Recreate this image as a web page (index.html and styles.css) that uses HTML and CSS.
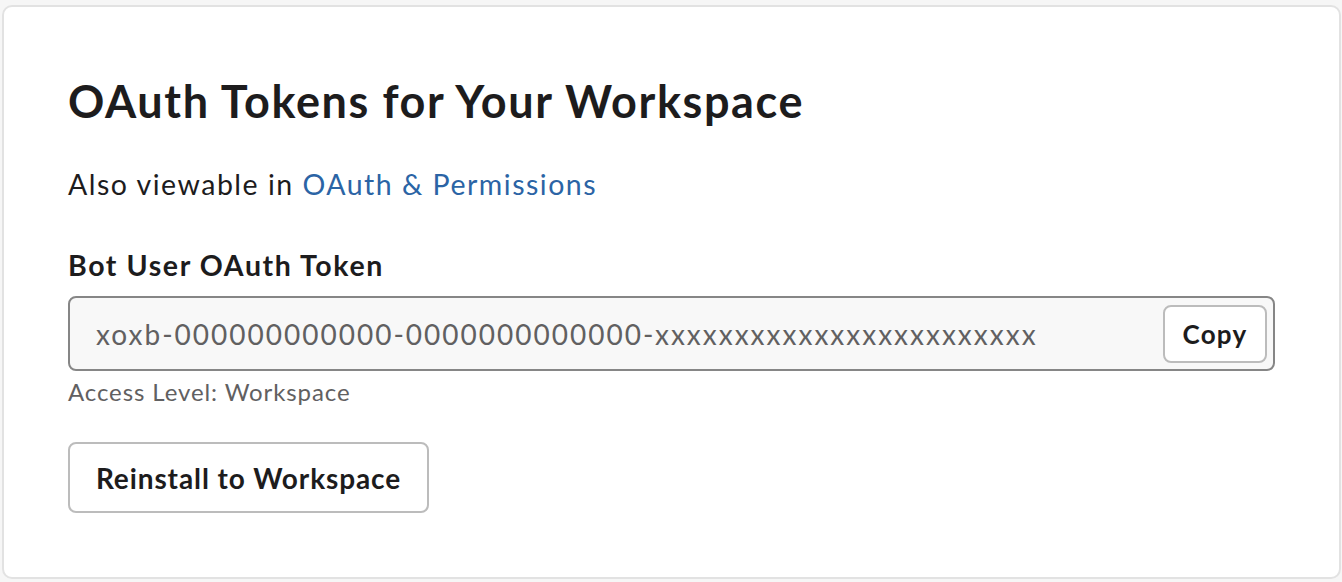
FILE: index.html
```html
<!DOCTYPE html>
<html lang="en">
<head>
<meta charset="utf-8">
<title>OAuth Tokens</title>
<link rel="stylesheet" href="styles.css">
</head>
<body>
<div class="card">
  <h2 class="title">OAuth Tokens for Your Workspace</h2>
  <p class="intro">Also viewable in <a class="link" href="#">OAuth &amp; Permissions</a></p>
  <div class="field">
    <div class="label">Bot User OAuth Token</div>
    <div class="token-box">
      <span class="token">xoxb-000000000000-0000000000000-xxxxxxxxxxxxxxxxxxxxxxxx</span>
      <button class="btn btn-copy">Copy</button>
    </div>
    <div class="hint">Access Level: Workspace</div>
  </div>
  <button class="btn btn-reinstall">Reinstall to Workspace</button>
</div>
</body>
</html>
```

FILE: styles.css
```css
html, body {
  margin: 0;
  padding: 0;
}
body {
  background: #f6f6f6;
  font-family: Lato, "Noto Sans", sans-serif;
  color: #1d1c1d;
  padding: 5px 1px 3px 2px;
  height: 582px;
  box-sizing: border-box;
}
.card {
  background: #fff;
  border: 2px solid #e2e2e2;
  border-radius: 10px;
  height: 574px;
  box-sizing: border-box;
  padding: 68px 64px 0 64px;
}
.title {
  margin: 0;
  font-size: 45px;
  font-weight: 700;
  line-height: 53px;
  letter-spacing: 1.6px;
}
.intro {
  margin: 39px 0 0 0;
  font-size: 28.5px;
  line-height: 34px;
  letter-spacing: 1.5px;
}
.link {
  color: #2b64a5;
  text-decoration: none;
}
.field {
  margin-top: 47px;
}
.label {
  font-size: 28.5px;
  font-weight: 700;
  line-height: 34px;
  letter-spacing: 1.6px;
}
.token-box {
  margin-top: 14px;
  display: flex;
  align-items: center;
  justify-content: space-between;
  height: 75px;
  box-sizing: border-box;
  border: 2px solid #868686;
  border-radius: 8px;
  background: #f8f8f8;
  padding: 0 6px 0 26px;
}
.token {
  font-size: 28px;
  color: #616061;
  letter-spacing: 2px;
}
.btn {
  font-family: Lato, "Noto Sans", sans-serif;
  font-weight: 700;
  color: #1d1c1d;
  background: #fff;
  border: 2px solid #bcbcbc;
  border-radius: 8px;
  cursor: pointer;
}
.btn-copy {
  height: 58px;
  width: 104px;
  font-size: 26px;
  letter-spacing: 1.2px;
  padding: 0;
}
.hint {
  margin-top: 6px;
  font-size: 24px;
  line-height: 30px;
  color: #616061;
  letter-spacing: 0.9px;
}
.btn-reinstall {
  margin-top: 35px;
  height: 71px;
  width: 361px;
  font-size: 28px;
  letter-spacing: 0.9px;
  padding: 0;
}
```
